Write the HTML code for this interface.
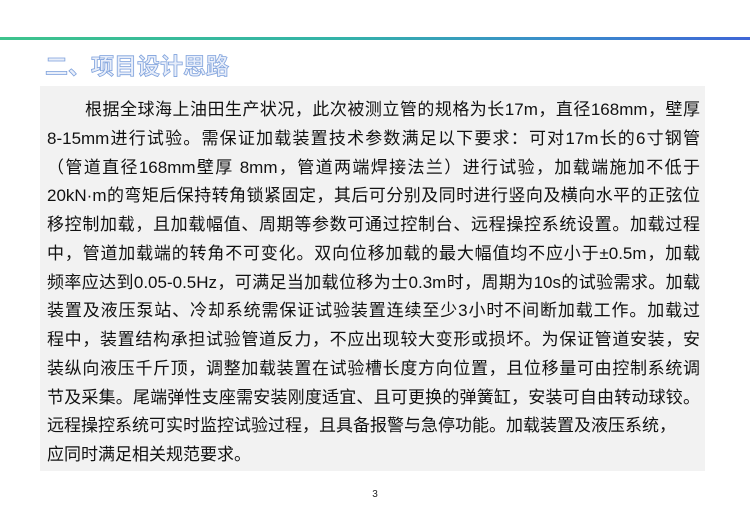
<!DOCTYPE html>
<html><head><meta charset="utf-8">
<style>
html,body{margin:0;padding:0;background:#fff;}
body{width:750px;height:519px;position:relative;overflow:hidden;font-family:"Liberation Sans","Noto Sans CJK SC",sans-serif;}
.bar{position:absolute;left:0;top:37px;width:750px;height:3px;background:linear-gradient(90deg,#3dc38c 0%,#33b3a8 45%,#3a8ccc 75%,#3f66d6 100%);}
.title{position:absolute;left:45px;top:51px;font-size:23px;line-height:30px;font-weight:bold;color:#e8eefa;-webkit-text-stroke:0.8px #7fa2dc;white-space:nowrap;}
.box{position:absolute;left:40px;top:86px;width:665px;height:385px;background:#f2f2f2;}
.l{position:absolute;left:47px;width:653px;font-size:17px;line-height:28px;color:#111;white-space:nowrap;text-align:justify;text-align-last:justify;}
.n{text-align-last:left;}
.pg{position:absolute;left:0;width:750px;top:489px;text-align:center;font-size:10px;color:#222;}
</style></head><body>
<div class="bar"></div>
<div class="title">二、项目设计思路</div>
<div class="box"></div>
<div class="l" style="top:96px;left:85px;width:615px">根据全球海上油田生产状况，此次被测立管的规格为长17m，直径168mm，壁厚</div>
<div class="l" style="top:124.75px">8-15mm进行试验。需保证加载装置技术参数满足以下要求：可对17m长的6寸钢管</div>
<div class="l" style="top:153.5px">（管道直径168mm壁厚 8mm，管道两端焊接法兰）进行试验，加载端施加不低于</div>
<div class="l" style="top:182.25px">20kN·m的弯矩后保持转角锁紧固定，其后可分别及同时进行竖向及横向水平的正弦位</div>
<div class="l" style="top:211px">移控制加载，且加载幅值、周期等参数可通过控制台、远程操控系统设置。加载过程</div>
<div class="l" style="top:239.75px">中，管道加载端的转角不可变化。双向位移加载的最大幅值均不应小于±0.5m，加载</div>
<div class="l" style="top:268.5px">频率应达到0.05-0.5Hz，可满足当加载位移为士0.3m时，周期为10s的试验需求。加载</div>
<div class="l" style="top:297.25px">装置及液压泵站、冷却系统需保证试验装置连续至少3小时不间断加载工作。加载过</div>
<div class="l" style="top:326px">程中，装置结构承担试验管道反力，不应出现较大变形或损坏。为保证管道安装，安</div>
<div class="l" style="top:354.75px">装纵向液压千斤顶，调整加载装置在试验槽长度方向位置，且位移量可由控制系统调</div>
<div class="l" style="top:383.5px">节及采集。尾端弹性支座需安装刚度适宜、且可更换的弹簧缸，安装可自由转动球铰。</div>
<div class="l n" style="top:412.25px">远程操控系统可实时监控试验过程，且具备报警与急停功能。加载装置及液压系统，</div>
<div class="l n" style="top:441px">应同时满足相关规范要求。</div>
<div class="pg">3</div>
</body></html>
